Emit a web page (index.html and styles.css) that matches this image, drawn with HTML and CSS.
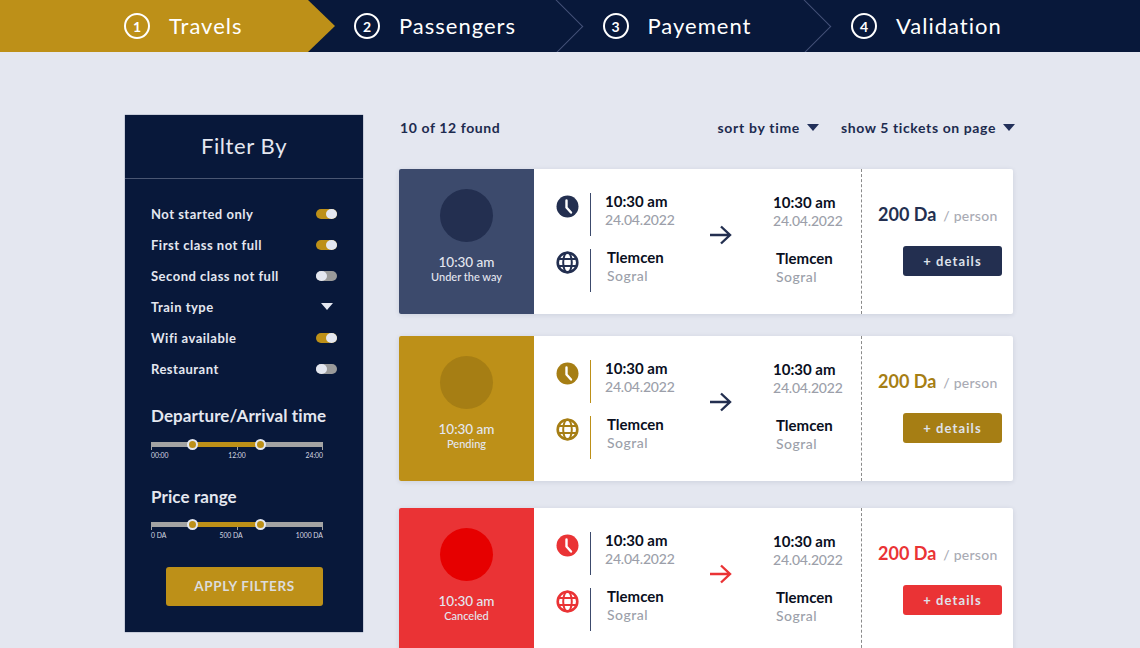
FILE: index.html
```html
<!DOCTYPE html>
<html lang="en">
<head>
<meta charset="utf-8"/>
<title>Travels</title>
<link rel="stylesheet" href="styles.css">
</head>
<body>
<svg class="sprite" xmlns="http://www.w3.org/2000/svg">
  <symbol id="clock" viewBox="0 0 23 23">
    <circle cx="11.5" cy="11.5" r="11" fill="currentColor"/>
    <path d="M10.5 5.5v7l4.500 5" fill="none" stroke="#fff" stroke-width="2.400" stroke-linecap="round" stroke-linejoin="round"/>
  </symbol>
  <symbol id="globe" viewBox="0 0 23 23">
    <g fill="none" stroke="currentColor">
      <circle cx="11.5" cy="11.5" r="9.800" stroke-width="2.600"/>
      <ellipse cx="11.5" cy="11.5" rx="4.300" ry="10" stroke-width="2"/>
      <path d="M2 8h19M2 15h19" stroke-width="2"/>
    </g>
  </symbol>
  <symbol id="arrow" viewBox="0 0 22 20">
    <path d="M0 10h20M11 1.500l9 8.500-9 8.500" fill="none" stroke="currentColor" stroke-width="2.400"/>
  </symbol>
</svg>

<header class="steps">
  <div class="step step-active"><span class="step-num">1</span><span class="step-label">Travels</span></div>
  <div class="step"><span class="step-num">2</span><span class="step-label">Passengers</span></div>
  <div class="step"><span class="step-num">3</span><span class="step-label">Payement</span></div>
  <div class="step"><span class="step-num">4</span><span class="step-label">Validation</span></div>
</header>

<main class="page">
  <aside class="filters">
    <h2 class="filters-title">Filter By</h2>
    <ul class="filter-list">
      <li><span>Not started only</span><i class="toggle on"></i></li>
      <li><span>First class not full</span><i class="toggle on"></i></li>
      <li><span>Second class not full</span><i class="toggle"></i></li>
      <li><span>Train type</span><i class="caret caret-light"></i></li>
      <li><span>Wifi available</span><i class="toggle on"></i></li>
      <li><span>Restaurant</span><i class="toggle"></i></li>
    </ul>

    <h3 class="range-title">Departure/Arrival time</h3>
    <div class="range">
      <div class="range-track"><b class="range-fill"></b><i class="thumb thumb-a"></i><i class="thumb thumb-b"></i></div>
      <div class="range-labels"><span>00:00</span><span>12:00</span><span>24:00</span></div>
    </div>

    <h3 class="range-title range-title-price">Price range</h3>
    <div class="range">
      <div class="range-track"><b class="range-fill"></b><i class="thumb thumb-a"></i><i class="thumb thumb-b"></i></div>
      <div class="range-labels"><span>0 DA</span><span>500 DA</span><span>1000 DA</span></div>
    </div>

    <button class="apply">APPLY FILTERS</button>
  </aside>

  <section class="results">
    <div class="results-bar">
      <span class="found">10 of 12 found</span>
      <span class="sorter sorter-time">sort by time<i class="caret"></i></span>
      <span class="sorter">show 5 tickets on page<i class="caret"></i></span>
    </div>

    <article class="ticket ticket-way">
      <div class="status">
        <div class="status-dot"></div>
        <div class="status-time">10:30 am</div>
        <div class="status-text">Under the way</div>
      </div>
      <div class="journey">
        <div class="legs">
          <div class="leg">
            <svg class="leg-icon"><use href="#clock"/></svg>
            <div class="leg-text"><strong>10:30 am</strong><span>24.04.2022</span></div>
          </div>
          <div class="leg">
            <svg class="leg-icon"><use href="#globe"/></svg>
            <div class="leg-text leg-place"><strong>Tlemcen</strong><span>Sogral</span></div>
          </div>
        </div>
        <svg class="arrow"><use href="#arrow"/></svg>
        <div class="legs legs-end">
          <div class="leg"><div class="leg-text"><strong>10:30 am</strong><span>24.04.2022</span></div></div>
          <div class="leg"><div class="leg-text leg-place"><strong>Tlemcen</strong><span>Sogral</span></div></div>
        </div>
      </div>
      <div class="price">
        <div class="price-line"><strong>200 Da</strong><span>/ person</span></div>
        <button class="details">+ details</button>
      </div>
    </article>

    <article class="ticket ticket-pending">
      <div class="status">
        <div class="status-dot"></div>
        <div class="status-time">10:30 am</div>
        <div class="status-text">Pending</div>
      </div>
      <div class="journey">
        <div class="legs">
          <div class="leg">
            <svg class="leg-icon"><use href="#clock"/></svg>
            <div class="leg-text"><strong>10:30 am</strong><span>24.04.2022</span></div>
          </div>
          <div class="leg">
            <svg class="leg-icon"><use href="#globe"/></svg>
            <div class="leg-text leg-place"><strong>Tlemcen</strong><span>Sogral</span></div>
          </div>
        </div>
        <svg class="arrow"><use href="#arrow"/></svg>
        <div class="legs legs-end">
          <div class="leg"><div class="leg-text"><strong>10:30 am</strong><span>24.04.2022</span></div></div>
          <div class="leg"><div class="leg-text leg-place"><strong>Tlemcen</strong><span>Sogral</span></div></div>
        </div>
      </div>
      <div class="price">
        <div class="price-line"><strong>200 Da</strong><span>/ person</span></div>
        <button class="details">+ details</button>
      </div>
    </article>

    <article class="ticket ticket-canceled">
      <div class="status">
        <div class="status-dot"></div>
        <div class="status-time">10:30 am</div>
        <div class="status-text">Canceled</div>
      </div>
      <div class="journey">
        <div class="legs">
          <div class="leg">
            <svg class="leg-icon"><use href="#clock"/></svg>
            <div class="leg-text"><strong>10:30 am</strong><span>24.04.2022</span></div>
          </div>
          <div class="leg">
            <svg class="leg-icon"><use href="#globe"/></svg>
            <div class="leg-text leg-place"><strong>Tlemcen</strong><span>Sogral</span></div>
          </div>
        </div>
        <svg class="arrow"><use href="#arrow"/></svg>
        <div class="legs legs-end">
          <div class="leg"><div class="leg-text"><strong>10:30 am</strong><span>24.04.2022</span></div></div>
          <div class="leg"><div class="leg-text leg-place"><strong>Tlemcen</strong><span>Sogral</span></div></div>
        </div>
      </div>
      <div class="price">
        <div class="price-line"><strong>200 Da</strong><span>/ person</span></div>
        <button class="details">+ details</button>
      </div>
    </article>
  </section>
</main>
</body>
</html>
```
FILE: styles.css
```css
* { box-sizing: border-box; }
html, body { height: 648px; overflow: hidden; }
body { margin: 0; background: #e4e7f0; color: #08183a; font-family: "Lato", "Noto Sans", sans-serif; }
.sprite { display: none; }

/* steps */
.steps { display: flex; height: 52px; overflow: hidden; background: #08183a; color: #fff; font-size: 22px; letter-spacing: 1px; }
.step { position: relative; display: flex; align-items: center; gap: 19px; width: 248.5px; padding-left: 19px; }
.step:not(.step-active):not(:last-child)::after {
  content: ""; position: absolute; right: 8px; top: 6px; width: 40px; height: 40px;
  border-top: 1px solid #46527a; border-right: 1px solid #46527a; transform: rotate(45deg) scale(.96);
}
.step-active { width: 335px; padding-left: 124px; background: #bd9018; clip-path: polygon(0 0, 308px 0, 100% 50%, 308px 100%, 0 100%); }
.step-num { display: flex; align-items: center; justify-content: center; width: 26px; height: 26px; border: 2px solid #fff; border-radius: 50%; font-size: 14px; font-weight: 700; letter-spacing: 0; }
.step-label { margin-top: -2px; }

.page { display: flex; gap: 36px; padding: 63px 0 0 125px; }

/* filters */
.filters { width: 238px; height: 517px; flex: none; background: #08183a; color: #e4e7f0; box-shadow: 0 0 1px #3c4a6c; }
.filters-title { margin: 0; height: 64px; line-height: 62px; border-bottom: 1px solid #4a5672; text-align: center; font-size: 22px; font-weight: 400; letter-spacing: .6px; }
.filter-list { list-style: none; margin: 19px 26px 0; padding: 0; font-size: 13px; font-weight: 700; letter-spacing: .5px; }
.filter-list li { display: flex; align-items: center; justify-content: space-between; height: 31px; }
.toggle { position: relative; width: 21px; height: 10px; border-radius: 5px; background: #9a9a9a; }
.toggle::after { content: ""; position: absolute; left: 0; top: 0; width: 11px; height: 10px; border-radius: 50%; background: #e4e7f0; }
.toggle.on { background: #bd9018; }
.toggle.on::after { left: 10px; }
.caret { display: inline-block; width: 0; height: 0; border-left: 6px solid transparent; border-right: 6px solid transparent; border-top: 7px solid #22305a; }
.caret-light { margin-right: 4px; border-top-color: #e4e7f0; }

.range-title { margin: 21px 26px 0; font-size: 17px; line-height: 22px; font-weight: 700; letter-spacing: .1px; }
.range-title-price { margin-top: 26px; }
.range { margin: 15px 40px 0 26px; }
.range-title-price + .range { margin-top: 14px; }
.range-track { position: relative; height: 5px; background: #a3a3a3; }
.range-fill { position: absolute; left: 41px; width: 68px; top: 0; bottom: 0; background: #bd9018; }
.thumb { position: absolute; top: -3px; width: 11px; height: 11px; border: 2px solid #e4e7f0; border-radius: 50%; background: #bd9018; }
.thumb-a { left: 36px; }
.thumb-b { left: 104px; }
.range-labels {
  display: flex; justify-content: space-between; padding-top: 4px; font-size: 6.8px; line-height: 9px; color: #d6d9e2;
  background: linear-gradient(#a3a3a3, #a3a3a3) 0 0 / 1px 3px no-repeat, linear-gradient(#a3a3a3, #a3a3a3) 50% 0 / 1px 3px no-repeat, linear-gradient(#a3a3a3, #a3a3a3) 100% 0 / 1px 3px no-repeat;
}

.apply { display: block; width: 157px; height: 39px; margin: 27px 0 0 41px; padding: 0 0 2px; border: 0; border-radius: 3px; background: #bd9018; color: #dcdcdc; font: 700 13.5px "Lato", sans-serif; letter-spacing: .6px; }

/* results */
.results { display: flex; flex-direction: column; width: 614px; gap: 22px; }
.results-bar { display: flex; align-items: center; height: 24px; margin-bottom: 8px; font-size: 14px; font-weight: 700; letter-spacing: .6px; color: #1d2b4f; }
.found { margin-right: auto; padding-left: 1px; }
.sorter { display: flex; align-items: center; gap: 7px; margin-right: -2px; }
.sorter-time { margin-right: 22px; letter-spacing: .7px; }

.ticket { --accent: #3c4a6c; --rule: #3c4a6c; --dark: #232f50; --arrow: #232f50; --icon: #232f50; --price: #232f50; display: flex; height: 145px; background: #fff; border-radius: 2px; box-shadow: 0 1px 5px rgba(35, 47, 80, .12); }
.ticket-pending { --accent: #bd9018; --rule: #bd9018; --dark: #a67e14; --icon: #a67e14; --price: #a67e14; }
.ticket-canceled { --accent: #ea3335; --dark: #e60000; --arrow: #ea3335; --icon: #ea3335; --price: #ea3335; margin-top: 5px; }

.status { width: 135px; flex: none; padding-top: 20px; border-radius: 2px 0 0 2px; background: var(--accent); color: #e4e7f0; text-align: center; }
.status-dot { width: 53px; height: 53px; margin: 0 auto 12px; border-radius: 50%; background: var(--dark); }
.status-time { font-size: 13.5px; line-height: 16px; font-weight: 500; }
.status-text { font-size: 11px; line-height: 14px; font-weight: 500; }

.journey { display: flex; width: 327px; padding: 24px 0 0 22px; }
.legs { width: 154px; flex: none; }
.leg { display: flex; align-items: flex-start; height: 43px; margin-bottom: 13px; }
.leg-icon { width: 23px; height: 23px; margin: 2px 11px 0 0; flex: none; color: var(--icon); }
.leg-text { height: 43px; padding-left: 14px; border-left: 1px solid var(--rule); }
.leg-text strong { display: block; font-size: 15px; line-height: 16px; font-weight: 700; color: #0a0f1e; }
.leg-text span { display: block; font-size: 14px; line-height: 21px; font-weight: 500; letter-spacing: -.2px; color: #9c9faa; }
.leg-place { padding-left: 16px; }
.leg-place span { letter-spacing: .5px; }
.legs-end { padding-top: 1px; width: auto; }
.legs-end .leg-text { padding-left: 0; border-left: 0; }
.legs-end .leg-place { padding-left: 3px; }
.arrow { width: 22px; height: 20px; margin: 32px 41px 0 0; flex: none; color: var(--arrow); }

.price { flex: 1; padding: 35px 11px 0 16px; border-left: 1px dashed #8a8a8a; }
.price-line { display: flex; align-items: baseline; gap: 7px; height: 42px; }
.price-line strong { font-size: 18px; line-height: 20px; font-weight: 700; color: var(--price); }
.price-line span { font-size: 14px; font-weight: 500; letter-spacing: .25px; color: #a9abb4; }
.details { display: block; width: 99px; height: 30px; margin-left: auto; border: 0; border-radius: 3px; background: var(--dark); color: #dfe2ea; font: 700 13px "Lato", sans-serif; letter-spacing: 1.1px; }
.ticket-canceled .details { background: #ea3335; }
```
